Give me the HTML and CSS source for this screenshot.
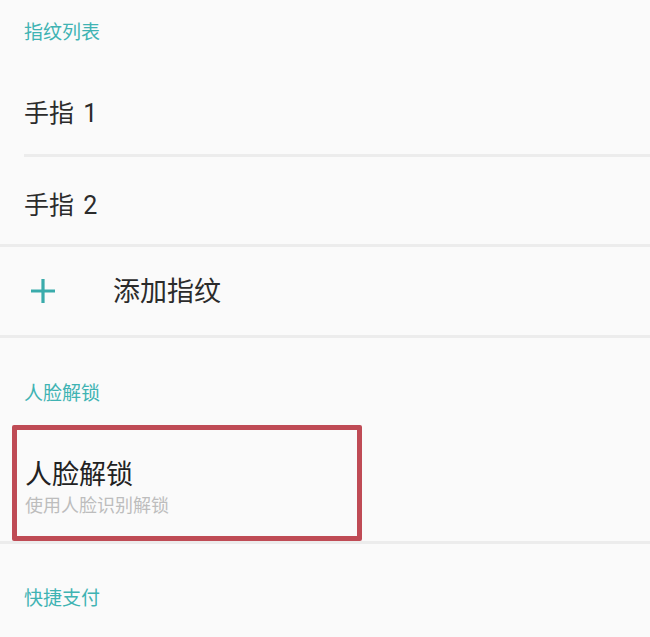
FILE: index.html
```html
<!DOCTYPE html>
<html lang="zh-CN">
<head>
<meta charset="utf-8">
<link rel="stylesheet" href="styles.css">
</head>
<body>
<div class="page">
  <div class="header first">指纹列表</div>
  <div class="row inset r1"><span class="title">手指 1</span></div>
  <div class="row r2"><span class="title">手指 2</span></div>
  <div class="row add">
    <svg class="plus" width="26" height="26" viewBox="0 0 26 26"><path d="M13 1V25M1 13H25" stroke="#3aabab" stroke-width="3.2" fill="none"/></svg>
    <span class="title big">添加指纹</span>
  </div>
  <div class="header second">人脸解锁</div>
  <div class="face-row">
    <div class="face-box">
      <div class="face-title">人脸解锁</div>
      <div class="face-sub">使用人脸识别解锁</div>
    </div>
  </div>
  <div class="header third">快捷支付</div>
</div>
</body>
</html>
```

FILE: styles.css
```css
html, body {
  margin: 0;
  padding: 0;
  background: #fafafa;
}
body {
  font-family: "Roboto", "Noto Sans CJK SC", sans-serif;
  width: 650px;
  height: 637px;
  overflow: hidden;
}
.page {
  display: flex;
  flex-direction: column;
}
.header {
  display: flex;
  align-items: center;
  padding-left: 24px;
  color: #3fb3b3;
  font-size: 19px;
  line-height: 1;
  box-sizing: border-box;
}
.header.first { height: 62px; padding-top: 2px; }
.header.second { height: 87px; padding-top: 24px; }
.header.third { height: 90px; padding-top: 19px; }
.row {
  display: flex;
  align-items: center;
  padding-left: 24px;
  border-bottom: 3px solid #ececec;
  box-sizing: border-box;
}
.row.inset {
  margin-left: 24px;
  padding-left: 0;
}
.r1 { height: 95px; padding-top: 11px; }
.r2 { height: 90px; padding-top: 9px; }
.add { height: 91px; padding-left: 30px; padding-top: 3px; }
.title {
  font-size: 25px;
  color: #2b2b2b;
  line-height: 1;
  word-spacing: 3px;
}
.title.big { font-size: 27px; }
.plus { margin-right: 57px; margin-bottom: 3px; }
.face-row {
  height: 119px;
  padding-left: 12px;
  border-bottom: 3px solid #ececec;
  box-sizing: border-box;
}
.face-box {
  width: 350px;
  height: 116px;
  box-sizing: border-box;
  border: 5px solid #bf4b55;
  border-radius: 2px;
  padding: 30px 0 0 8px;
  display: flex;
  flex-direction: column;
}
.face-title {
  font-size: 27px;
  color: #222222;
  line-height: 30px;
}
.face-sub {
  font-size: 18px;
  color: #bdbdbd;
  line-height: 20px;
  margin-top: 6px;
}
```
